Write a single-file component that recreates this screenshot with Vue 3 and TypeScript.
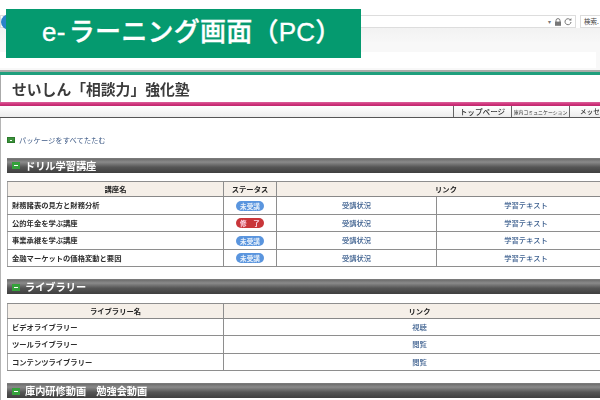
<script setup lang="ts">
interface Course { name: string; done: boolean }
const courses: Course[] = [
  { name: '財務諸表の見方と財務分析', done: false },
  { name: '公的年金を学ぶ講座', done: true },
  { name: '事業承継を学ぶ講座', done: false },
  { name: '金融マーケットの価格変動と要因', done: false },
]
const libraries = [
  { name: 'ビデオライブラリー', link: '視聴' },
  { name: 'ツールライブラリー', link: '閲覧' },
  { name: 'コンテンツライブラリー', link: '閲覧' },
]
</script>

<template>
  <div class="screen">
    <div class="shot">
      <div class="browser">
        <div class="address-row">
          <div class="address">
            <span class="caret">▾</span>
            <svg class="lock" width="8" height="8" viewBox="0 0 8 8"><path d="M2 4V2.6a2 2 0 0 1 4 0V4" fill="none" stroke="#777" stroke-width="1"/><rect x="1" y="3.6" width="6" height="4.2" fill="#777"/></svg>
            <svg class="reload" width="8" height="8" viewBox="0 0 8 8"><path d="M6.6 2.2A3 3 0 1 0 7 4" fill="none" stroke="#777" stroke-width="1"/><path d="M5 2.4h2.4V0z" fill="#777"/></svg>
          </div>
          <div class="search">検索.</div>
        </div>
        <div class="tabbar"></div>
        <div class="favbar"><div class="favfield"></div></div>
      </div>
      <div class="rule-grey"></div>
      <div class="rule-green"></div>
      <h1 class="title">せいしん「相談力」強化塾</h1>
      <div class="rule-pink"></div>
      <nav class="nav">
        <span class="nav-item top">トップページ</span>
        <span class="nav-item comm">庫内コミュニケーション</span>
        <span class="nav-item msg">メッセ</span>
      </nav>
      <main class="content">
        <div class="collapse"><span class="mini-icon"></span><span>パッケージをすべてたたむ</span></div>

        <h2 class="section first"><span class="sec-icon"></span>ドリル学習講座</h2>
        <table class="grid courses">
          <colgroup><col class="c1" /><col class="c2" /><col class="c3" /><col /></colgroup>
          <thead>
            <tr><th>講座名</th><th>ステータス</th><th colspan="2">リンク</th></tr>
          </thead>
          <tbody>
            <tr v-for="c in courses" :key="c.name">
              <td class="name">{{ c.name }}</td>
              <td class="center">
                <span class="badge" :class="{ done: c.done }">{{ c.done ? '修　了' : '未受講' }}</span>
              </td>
              <td class="link">受講状況</td>
              <td class="link">学習テキスト</td>
            </tr>
          </tbody>
        </table>

        <h2 class="section second"><span class="sec-icon"></span>ライブラリー</h2>
        <table class="grid libs">
          <colgroup><col class="c1" /><col /></colgroup>
          <thead>
            <tr><th>ライブラリー名</th><th>リンク</th></tr>
          </thead>
          <tbody>
            <tr v-for="l in libraries" :key="l.name">
              <td class="name">{{ l.name }}</td>
              <td class="link">{{ l.link }}</td>
            </tr>
          </tbody>
        </table>

        <h2 class="section third"><span class="sec-icon"></span>庫内研修動画　勉強会動画</h2>
      </main>
    </div>

    <div class="globe"></div>
    <div class="banner"><span class="lead">e-</span>ラーニング画面（PC）</div>
  </div>
</template>

<style>
html, body { margin: 0; background: #fff; }
</style>

<style scoped>
.screen {
  position: relative;
  width: 600px;
  height: 400px;
  overflow: hidden;
  background: #fff;
  font-family: "Noto Sans CJK JP", "Noto Sans", sans-serif;
}
.shot { width: 600px; height: 400px; overflow: hidden; filter: blur(0.35px); }

.browser { height: 70px; display: flex; flex-direction: column; }
.address-row { height: 28px; box-sizing: border-box; padding: 15px 0 0 0; display: flex; gap: 4px; background: #fff; }
.address {
  flex: 1; height: 13px; box-sizing: border-box; border: 1px solid #ddd; background: #fff;
  display: flex; align-items: center; justify-content: flex-end; gap: 2px; padding-right: 3px;
}
.caret { font-size: 6px; color: #777; margin-right: 1px; line-height: 1; }
.lock, .reload { display: block; }
.search {
  width: 20px; height: 13px; box-sizing: border-box; border: 1px solid #ddd; border-right: 0;
  font-size: 6.5px; line-height: 11px; color: #444; padding-left: 3px; white-space: nowrap; overflow: hidden;
}
.tabbar { height: 14px; background: linear-gradient(#f2f2f2, #f7f7f7); }
.favbar { height: 28px; box-sizing: border-box; padding: 10px 4px 0 0; background: #f8f8f8; }
.favfield { height: 16px; background: #fff; }

.rule-grey { height: 2px; background: #a9aca9; }
.rule-green { height: 3px; background: #1f9f7c; }
.title {
  margin: 0; height: 27px; box-sizing: border-box; padding-left: 11px;
  font-size: 14.8px; line-height: 27px; font-weight: 700; color: #3b3b3b; white-space: nowrap;
  border-left: 1px solid #aaa;
}
.rule-pink { height: 4px; background: linear-gradient(#d9619a, #cf2f78 60%, #b92a6c); }
.nav {
  height: 12px; box-sizing: border-box; display: flex; padding-left: 453px;
  background: linear-gradient(#fff, #ececec); border-bottom: 1px solid #555;
  white-space: nowrap;
}
.nav-item {
  box-sizing: border-box; height: 11px; border-left: 1px solid #666; font-size: 7.6px; line-height: 11px;
  color: #333; text-align: center; flex: none; font-weight: 500;
}
.nav-item.top { width: 58px; }
.nav-item.comm { width: 58px; font-size: 4.9px; font-weight: 400; }
.nav-item.msg { width: 31px; padding-left: 10px; text-align: left; font-size: 6.6px; }

.content { border-left: 1px solid #b5b5b5; height: 283px; box-sizing: border-box; padding-left: 6px; }
.collapse {
  height: 12px; padding-top: 16px; display: flex; align-items: center; gap: 4px;
  font-size: 7.3px; line-height: 12px; color: #3e5a86; white-space: nowrap;
  box-sizing: content-box;
}
.mini-icon { width: 8px; height: 6px; background: #3c913c; border: 1px solid #2c7a2c; box-sizing: border-box; position: relative; }
.mini-icon::after, .sec-icon::after {
  content: ""; position: absolute; left: 2px; right: 2px; top: 50%; height: 1px; margin-top: -0.5px; background: #fff;
}

.section {
  margin: 0; height: 14.5px; display: flex; align-items: center;
  font-size: 10.2px; line-height: 14px; font-weight: 700; color: #fff; white-space: nowrap;
  background: linear-gradient(#6e6e6e, #8a8a8a 22%, #555 58%, #3f3f3f);
  border-top: 1px solid #7a7a7a; box-sizing: border-box; padding-left: 5px;
}
.section.first { margin-top: 12px; }
.section.second { margin-top: 12px; height: 15px; }
.section.third { margin-top: 12px; height: 15px; }
.sec-icon { width: 8px; height: 7px; background: #35a13b; margin-right: 5px; flex: none; position: relative; }

.grid {
  width: 608px; table-layout: fixed; border-collapse: collapse; margin-top: 8.5px;
  font-size: 7.3px; line-height: 10px;
}
.courses .c1 { width: 216px; }
.courses .c2 { width: 53px; }
.courses .c3 { width: 160px; }
.libs .c1 { width: 216px; }
.grid th, .grid td { padding: 0; border: 1px solid #8e8e8e; overflow: hidden; white-space: nowrap; }
.grid tr > :first-child { border-left: 1px solid #aaa; }
.grid tr > :last-child { border-right: 0; }
.grid th { background: #f5efe8; color: #222; font-weight: 700; text-align: center; height: 14px; border-bottom: 1px solid #888; }
.grid td { height: 16.5px; background: #fff; }
.grid td.name { padding-left: 4px; color: #2e2e2e; font-weight: 700; }
.grid td.center { text-align: center; }
.grid td.link { text-align: center; color: #3c5f8e; font-weight: 500; }

.badge {
  display: inline-block; width: 28px; height: 10px; border-radius: 5px; background: #5a95de; color: #e8f1fb;
  font-size: 6.6px; line-height: 10px; font-weight: 700; vertical-align: middle; text-align: center;
}
.badge.done { background: #c9363a; color: #fde; }

.globe { position: absolute; left: 1px; top: 14px; width: 18px; height: 16px; border-radius: 50%; background: #2b82c9; }
.banner {
  position: absolute; left: 6px; top: 9px; width: 355px; height: 49px; box-sizing: border-box;
  background: #059a6f; color: #fff; padding-left: 36px;
  font-size: 26px; line-height: 47px; font-weight: 500; white-space: nowrap; letter-spacing: 0.25px;
  -webkit-text-stroke: 0.35px #fff;
  font-family: "Liberation Sans", "Noto Sans CJK JP", sans-serif;
}
.lead { margin-right: 3px; }
</style>
